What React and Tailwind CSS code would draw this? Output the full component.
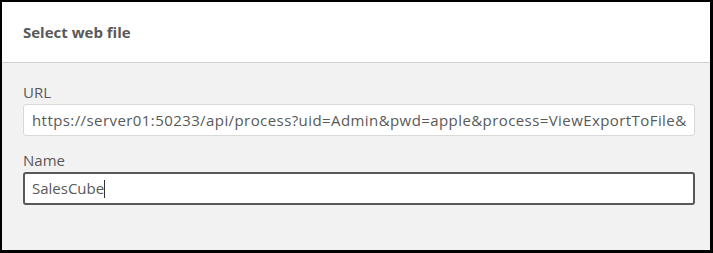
import React from "react";

const App = () => {
  return (
    <div
      className="w-[713px] h-[253px] flex flex-col border-black border-t-2 border-l-2 border-r-[3px] border-b-[3px] text-[#595959]"
      style={{ fontFamily: '"Open Sans", "Liberation Sans", sans-serif' }}
    >
      {/* Header */}
      <div className="h-[61px] shrink-0 bg-white border-b border-[#d0d0d0] flex items-center px-[21px]">
        <p className="text-[15px] font-bold leading-5">Select web file</p>
      </div>

      {/* Body */}
      <div className="flex-1 bg-[#f2f2f2] px-[21px] pt-[19px]">
        <label className="block text-[15px] leading-5 mb-[2px]">URL</label>
        <div className="h-[32px] w-[672px] bg-white border border-[#d9d9d9] rounded-[3px] flex items-center pl-[8px] pr-[4px] overflow-hidden">
          <span className="text-[15px] tracking-[0.42px] whitespace-nowrap">
            https://server01:50233/api/process?uid=Admin&amp;pwd=apple&amp;process=ViewExportToFile&amp;
          </span>
        </div>

        <label className="block text-[15px] leading-5 mt-[14px] mb-[2px]">Name</label>
        <div className="h-[33px] w-[672px] bg-white border-2 border-[#595959] rounded-[3px] flex items-center px-[7px]">
          <span className="text-[15px] whitespace-nowrap">SalesCube</span>
          <span className="w-px h-[18px] bg-[#333]" />
        </div>
      </div>
    </div>
  );
};

export default App;
